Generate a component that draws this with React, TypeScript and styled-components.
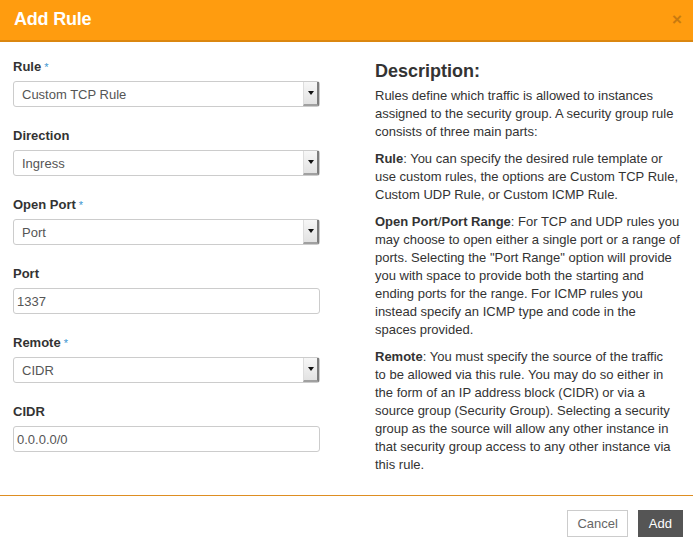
import styled, { createGlobalStyle } from 'styled-components'

const Global = createGlobalStyle`
	html, body {
		margin: 0;
		padding: 0;
		background: #fff;
	}
	body {
		font-family: "Liberation Sans", Arial, sans-serif;
		color: #333;
	}
`

type Field = {
	label: string
	required?: boolean
	kind: 'select' | 'input'
	value: string
}

const fields: Field[] = [
	{ label: 'Rule', required: true, kind: 'select', value: 'Custom TCP Rule' },
	{ label: 'Direction', kind: 'select', value: 'Ingress' },
	{ label: 'Open Port', required: true, kind: 'select', value: 'Port' },
	{ label: 'Port', kind: 'input', value: '1337' },
	{ label: 'Remote', required: true, kind: 'select', value: 'CIDR' },
	{ label: 'CIDR', kind: 'input', value: '0.0.0.0/0' },
]

const Modal = styled.div`
	width: 693px;
	height: 551px;
	display: flex;
	flex-direction: column;
	background: #fff;
`
const Header = styled.div`
	height: 40px;
	background: #ff9c0f;
	border-bottom: 2px solid #db8710;
	display: flex;
	align-items: center;
	justify-content: space-between;
	padding: 0 11px 0 14px;
`
const Title = styled.h3`
	margin: 0 0 1px;
	font-size: 18px;
	font-weight: bold;
	color: #fff;
	letter-spacing: -0.2px;
`
const Close = styled.span`
	font-size: 17px;
	font-weight: bold;
	color: #c87a10;
	line-height: 1;
	margin-top: -2px;
`
const Body = styled.div`
	flex: 1;
	display: grid;
	grid-template-columns: 307px 1fr;
	column-gap: 55px;
	padding: 16px 13px 0 13px;
	border-bottom: 1px solid #de8e22;
`
const Form = styled.div`
	display: flex;
	flex-direction: column;
`
const Group = styled.div`
	margin-bottom: 20px;
`
const Label = styled.div`
	font-size: 13px;
	font-weight: bold;
	line-height: 18px;
	color: #333;
	margin-bottom: 5px;
`
const Star = styled.span`
	color: #3a95d1;
	font-size: 11px;
	font-weight: normal;
	margin-left: 3px;
	vertical-align: top;
`
const SelectBox = styled.div`
	height: 26px;
	box-sizing: border-box;
	border: 1px solid #ccc;
	border-radius: 3px;
	display: flex;
	align-items: stretch;
	font-size: 13px;
	color: #555;
`
const SelectValue = styled.span`
	flex: 1;
	display: flex;
	align-items: center;
	padding-left: 8px;
`
const Arrow = styled.span`
	width: 13px;
	background: linear-gradient(#f7f7f7, #e2e2e2);
	border-left: 1px solid #ddd;
	border-right: 2px solid #7d7d7d;
	border-bottom: 2px solid #a0a0a0;
	display: flex;
	align-items: center;
	justify-content: center;
	&::after {
		content: '';
		border-left: 3px solid transparent;
		border-right: 3px solid transparent;
		border-top: 4px solid #111;
	}
`
const Input = styled.div`
	height: 26px;
	box-sizing: border-box;
	border: 1px solid #ccc;
	border-radius: 3px;
	display: flex;
	align-items: center;
	padding-left: 3px;
	font-size: 13px;
	color: #555;
`
const Help = styled.div`
	padding-top: 1px;
`
const HelpTitle = styled.h3`
	margin: 0 0 4px;
	font-size: 18px;
	font-weight: bold;
	line-height: 24px;
	color: #333;
`
const Para = styled.p`
	margin: 0 0 9px;
	font-size: 13px;
	line-height: 18px;
	color: #333;
`
const Footer = styled.div`
	height: 55px;
	display: flex;
	justify-content: flex-end;
	align-items: center;
	gap: 10px;
	padding: 0 10px 0 0;
`
const Button = styled.button<{ $primary?: boolean }>`
	height: 27px;
	box-sizing: border-box;
	padding: 0 ${(p) => (p.$primary ? '10px' : '9px')};
	font-family: "Liberation Sans", Arial, sans-serif;
	font-size: 13px;
	border-radius: 0;
	border: 1px solid ${(p) => (p.$primary ? '#555' : '#ccc')};
	background: ${(p) => (p.$primary ? '#555' : '#fff')};
	color: ${(p) => (p.$primary ? '#fff' : '#666')};
`

export default function App() {
	return (
		<>
			<Global />
			<Modal>
				<Header>
					<Title>Add Rule</Title>
					<Close>×</Close>
				</Header>
				<Body>
					<Form>
						{fields.map((f) => (
							<Group key={f.label}>
								<Label>
									{f.label}
									{f.required && <Star>*</Star>}
								</Label>
								{f.kind === 'select' ? (
									<SelectBox>
										<SelectValue>{f.value}</SelectValue>
										<Arrow />
									</SelectBox>
								) : (
									<Input>{f.value}</Input>
								)}
							</Group>
						))}
					</Form>
					<Help>
						<HelpTitle>Description:</HelpTitle>
						<Para>
							Rules define which traffic is allowed to instances assigned to the security group. A
							security group rule consists of three main parts:
						</Para>
						<Para>
							<strong>Rule</strong>: You can specify the desired rule template or use custom rules,
							the options are Custom TCP Rule, Custom UDP Rule, or Custom ICMP Rule.
						</Para>
						<Para>
							<strong>Open Port</strong>/<strong>Port Range</strong>: For TCP and UDP rules you may
							choose to open either a single port or a range of ports. Selecting the "Port Range"
							option will provide you with space to provide both the starting and ending ports for
							the range. For ICMP rules you instead specify an ICMP type and code in the spaces
							provided.
						</Para>
						<Para>
							<strong>Remote</strong>: You must specify the source of the traffic
							<br />
							to be allowed via this rule. You may do so either in the form of an IP address block
							(CIDR) or via a source group (Security Group). Selecting a security group as the
							source will allow any other instance in that security group access to any other
							instance via this rule.
						</Para>
					</Help>
				</Body>
				<Footer>
					<Button>Cancel</Button>
					<Button $primary>Add</Button>
				</Footer>
			</Modal>
		</>
	)
}
